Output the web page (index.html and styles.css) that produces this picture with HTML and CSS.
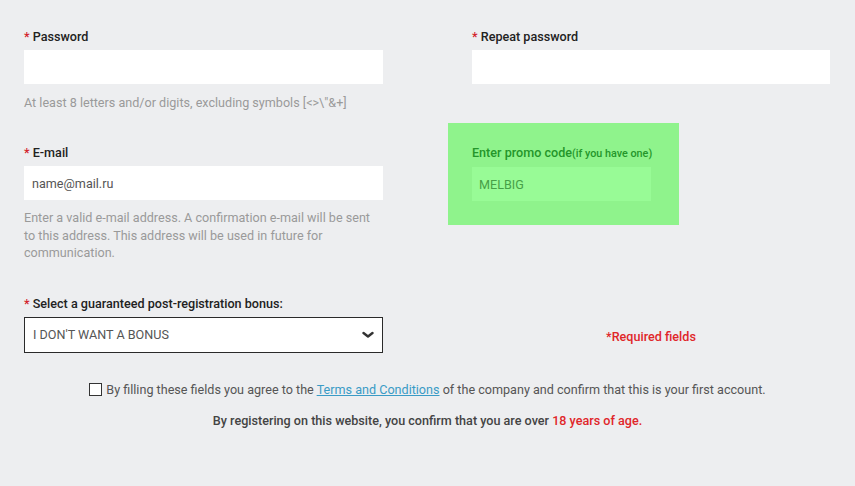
FILE: index.html
```html
<!DOCTYPE html>
<html lang="en">
<head>
<meta charset="utf-8">
<title>Registration</title>
<link rel="stylesheet" href="styles.css">
</head>
<body>
<div class="form">
  <div class="row row-1">
    <div class="field">
      <div class="label"><span class="req">*</span> Password</div>
      <div class="input"></div>
      <div class="hint">At least 8 letters and/or digits, excluding symbols [&lt;&gt;\"&amp;+]</div>
    </div>
    <div class="field">
      <div class="label"><span class="req">*</span> Repeat password</div>
      <div class="input"></div>
    </div>
  </div>
  <div class="row row-2">
    <div class="field email">
      <div class="label"><span class="req">*</span> E-mail</div>
      <div class="input"><span class="placeholder">name@mail.ru</span></div>
      <div class="hint hint-multi">Enter a valid e-mail address. A confirmation e-mail will be sent to this address. This address will be used in future for communication.</div>
    </div>
    <div class="promo">
      <div class="promo-label">Enter promo code<span class="promo-small">(if you have one)</span></div>
      <div class="promo-input">MELBIG</div>
    </div>
  </div>
  <div class="row row-3">
    <div class="field">
      <div class="label"><span class="req">*</span> Select a guaranteed post-registration bonus:</div>
      <div class="select">
        <span>I DON'T WANT A BONUS</span>
        <svg class="chev" width="12" height="8" viewBox="0 0 12 8"><polyline points="1.5,2 6,5.5 10.5,2" fill="none" stroke="#333" stroke-width="2.4" stroke-linecap="round" stroke-linejoin="round"/></svg>
      </div>
    </div>
    <div class="required">*Required fields</div>
  </div>
  <div class="agree">
    <span class="checkbox"></span>
    <span>By filling these fields you agree to the <a href="#" class="link">Terms and Conditions</a> of the company and confirm that this is your first account.</span>
  </div>
  <div class="age">By registering on this website, you confirm that you are over <span class="red">18 years of age.</span></div>
</div>
</body>
</html>
```
FILE: styles.css
```css
html, body {
  margin: 0;
  padding: 0;
  background: #edeef0;
}
body {
  font-family: Roboto, "Liberation Sans", Arial, sans-serif;
  font-size: 12.6px;
  color: #222;
}
.form {
  padding: 29px 0 0 24px;
  width: 806px;
}
.row {
  display: grid;
  grid-template-columns: 359px 358px;
  column-gap: 89px;
  align-items: start;
}
.label {
  font-weight: 500;
  font-size: 12.6px;
  line-height: 16px;
  margin-bottom: 5px;
  color: #222;
}
.req {
  color: #d3232b;
}
.input {
  height: 34px;
  background: #fff;
  display: flex;
  align-items: center;
  padding-left: 8px;
}
.placeholder {
  color: #555;
}
.hint {
  color: #9a9a9a;
  line-height: 17px;
  margin-top: 10px;
}
.hint-multi {
  line-height: 17.5px;
  margin-top: 9px;
}
.row-2 {
  margin-top: 12px;
}
.email {
  padding-top: 22px;
}
.promo {
  margin-left: -24px;
  width: 231px;
  box-sizing: border-box;
  height: 102px;
  background: #8ff38c;
  padding: 22px 28px 0 24px;
}
.promo-label {
  color: #24962a;
  font-weight: 500;
  line-height: 16px;
  margin-bottom: 5px;
  white-space: nowrap;
}
.promo-small {
  font-size: 10.8px;
}
.promo-input {
  height: 34px;
  background: #98fb96;
  color: #47a047;
  display: flex;
  align-items: center;
  padding-left: 7px;
}
.row-3 {
  margin-top: 34px;
}
.select {
  height: 36px;
  box-sizing: border-box;
  border: 1px solid #2a2a2a;
  background: #fff;
  display: flex;
  align-items: center;
  justify-content: space-between;
  padding: 0 8px 0 8px;
  color: #555;
}
.chev {
  display: block;
}
.required {
  align-self: end;
  text-align: center;
  color: #e0262a;
  font-weight: 500;
  line-height: 16px;
  padding-bottom: 8px;
}
.agree {
  margin-top: 29px;
  margin-left: -24px;
  width: 855px;
  display: flex;
  justify-content: center;
  align-items: center;
  gap: 4px;
  color: #555;
  line-height: 16px;
}
.checkbox {
  width: 11px;
  height: 11px;
  border: 1px solid #333;
  background: #fff;
  flex: none;
}
.link {
  color: #3a9bc6;
  text-decoration: underline;
}
.age {
  margin-top: 15px;
  margin-left: -24px;
  width: 855px;
  text-align: center;
  color: #444;
  font-weight: 500;
  line-height: 16px;
}
.red {
  color: #e0262a;
}
```
